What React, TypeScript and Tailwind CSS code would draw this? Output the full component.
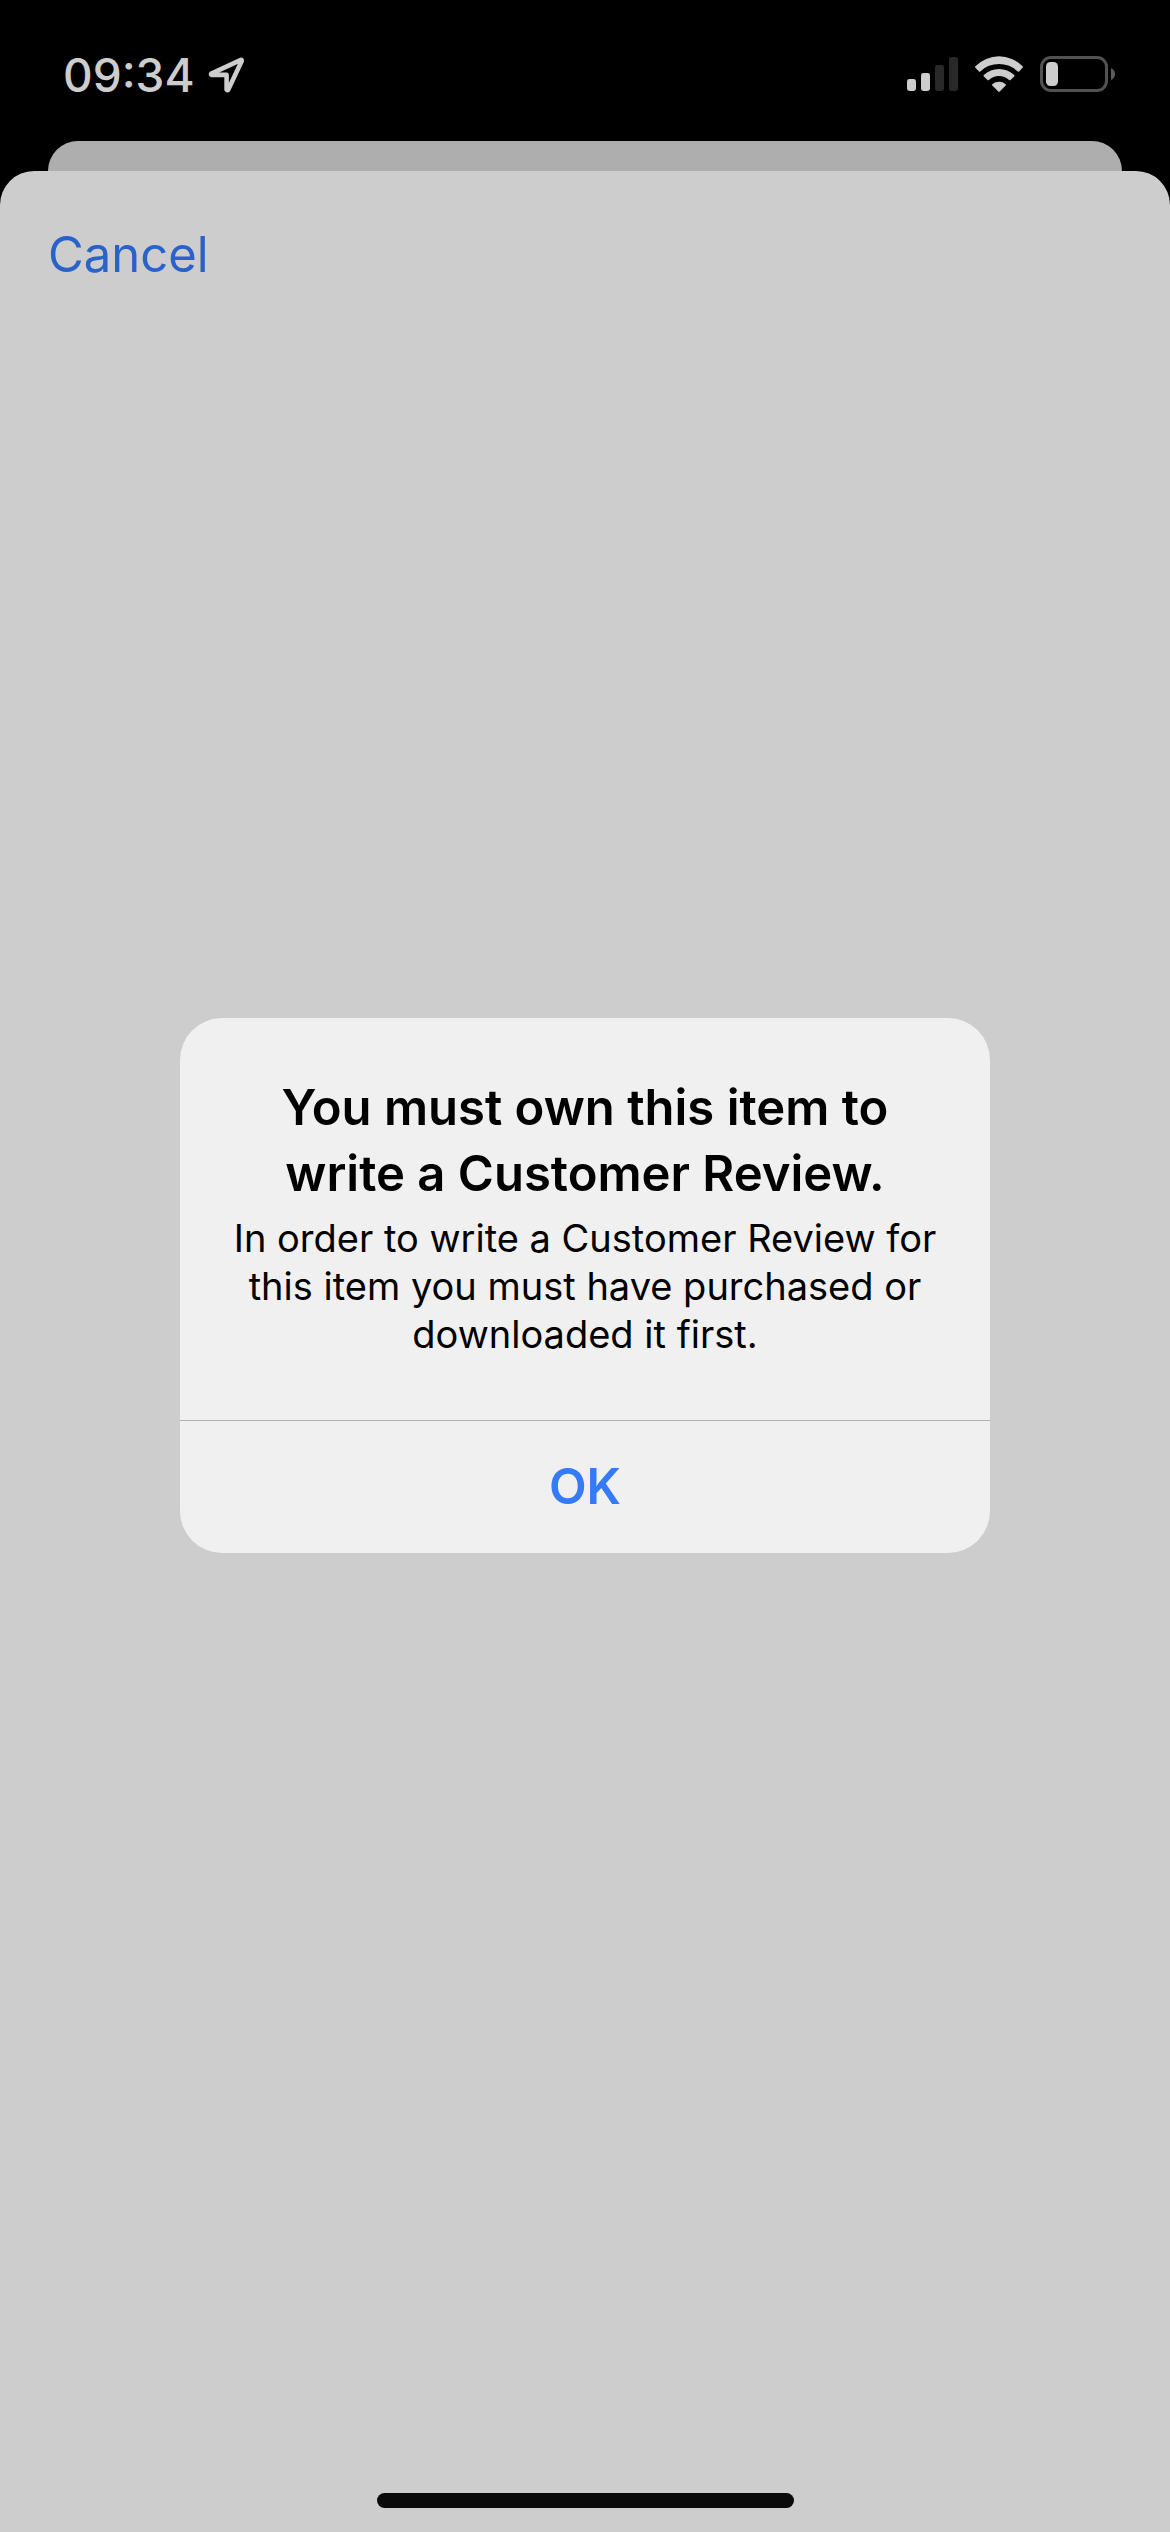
import React from "react";

function LocationArrow() {
  return (
    <svg width="38" height="38" viewBox="0 0 38 38" fill="none" stroke="#cdcdcd" strokeWidth="4.6" strokeLinejoin="round" aria-hidden="true">
      <path d="M34 3.8 L4.3 17.6 Q3.6 18.6 4.6 18.9 H19.6 V33.6 Q20.4 34.6 21.2 33.8 L34.7 5 Q34.8 4 34 3.8 Z" />
    </svg>
  );
}

function SignalBars() {
  return (
    <svg width="51" height="36" viewBox="0 0 51 36" aria-label="Signal strength: 2 of 4 bars" role="img">
      <rect x="0" y="23" width="9" height="12" rx="2.4" fill="#cdcdcd" />
      <rect x="14" y="17" width="9" height="18" rx="2.4" fill="#cdcdcd" />
      <rect x="28" y="9" width="9" height="26" rx="2.4" fill="#292929" />
      <rect x="42" y="1" width="9" height="34" rx="2.4" fill="#292929" />
    </svg>
  );
}

function Wifi() {
  return (
    <svg width="48" height="36" viewBox="0 0 48 36" fill="#cdcdcd" aria-label="Wi-Fi" role="img">
      <path d="M0.4 10.3 A33 33 0 0 1 47.6 10.3 Q48.3 11 47.6 11.7 L44 15.4 Q43.4 16 42.7 15.4 A27 27 0 0 0 5.3 15.4 Q4.6 16 4 15.4 L0.4 11.7 Q-0.3 11 0.4 10.3 Z" />
      <path d="M8.8 19 A22 22 0 0 1 39.2 19 Q39.9 19.7 39.2 20.4 L35.5 24 Q34.8 24.6 34.1 24 A15 15 0 0 0 13.9 24 Q13.2 24.6 12.5 24 L8.8 20.4 Q8.1 19.7 8.8 19 Z" />
      <path d="M17.3 28.2 A10.5 10.5 0 0 1 30.7 28.2 Q31.4 28.9 30.7 29.6 L24.7 35.6 Q24 36.2 23.3 35.6 L17.3 29.6 Q16.6 28.9 17.3 28.2 Z" />
    </svg>
  );
}

function Battery() {
  return (
    <svg width="75" height="36" viewBox="0 0 75 36" aria-label="Battery low" role="img">
      <rect x="1.5" y="1.5" width="65" height="33" rx="9.5" fill="none" stroke="#525252" strokeWidth="3" />
      <rect x="6" y="6" width="12" height="24" rx="4.5" fill="#cdcdcd" />
      <path d="M71 12 Q75 14 75 18 Q75 22 71 24 Z" fill="#5c5c5c" />
    </svg>
  );
}

export default function App() {
  return (
    <div className="relative flex min-h-screen flex-col bg-black font-['Inter',sans-serif]">
      <header className="flex h-[141px] items-start justify-between pt-[45px] pr-[55px] pl-[63px]">
        <div className="flex items-center gap-3">
          <time className="text-[46px] leading-[60px] font-medium text-[#cdcdcd]">09:34</time>
          <LocationArrow />
        </div>
        <div className="flex h-[58px] items-center gap-[17px]">
          <SignalBars />
          <Wifi />
          <Battery />
        </div>
      </header>

      <div className="mx-12 h-[30px] rounded-t-[30px] bg-[#aeaeae]" />

      <main className="flex flex-1 flex-col justify-between rounded-t-[34px] bg-[#cdcdcd]">
        <nav className="px-12 pt-[52px]">
          <button type="button" className="text-[49px] leading-[64px] text-[#2962c8]">
            Cancel
          </button>
        </nav>
        <div className="mx-auto mb-6 h-[15px] w-[417px] rounded-full bg-[#0a0a0a]" />
      </main>

      <div className="absolute inset-0 flex items-center justify-center pt-[39px]">
        <section
          role="alertdialog"
          aria-modal="true"
          aria-labelledby="alert-title"
          aria-describedby="alert-message"
          className="w-[810px] overflow-hidden rounded-[42px] bg-[#f0f0f0] text-center text-black"
        >
          <div className="px-12 pt-[57px] pb-[62px]">
            <h1 id="alert-title" className="text-[49px] leading-[66px] font-semibold">
              You must own this item to
              <br />
              write a Customer Review.
            </h1>
            <p id="alert-message" className="mt-[7px] text-[38px] leading-[48px]">
              In order to write a Customer Review for
              <br />
              this item you must have purchased or
              <br />
              downloaded it first.
            </p>
          </div>
          <button type="button" className="h-[133px] w-full border-t border-[#b0b0b0] text-[49px] font-semibold text-[#357af6]">
            OK
          </button>
        </section>
      </div>
    </div>
  );
}
